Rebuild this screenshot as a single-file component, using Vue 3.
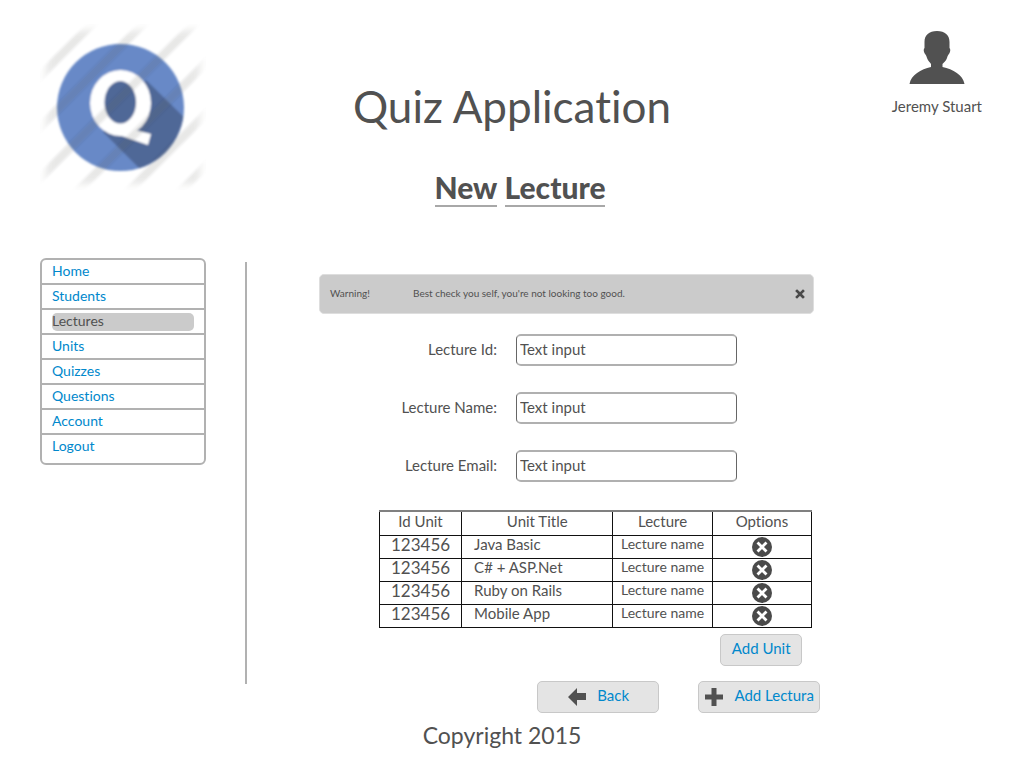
<script setup>
const links = ['Home', 'Students', 'Lectures', 'Units', 'Quizzes', 'Questions', 'Account', 'Logout']
const fields = [
  { id: 'lecture-id', label: 'Lecture Id:' },
  { id: 'lecture-name', label: 'Lecture Name:' },
  { id: 'lecture-email', label: 'Lecture Email:' }
]
const units = ['Java Basic', 'C# + ASP.Net', 'Ruby on Rails', 'Mobile App']
const stripes = [52, 103, 154, 205, 256, 308]
</script>

<template>
  <div class="page">
    <header class="header">
      <svg class="logo" viewBox="0 0 166 166" role="img" aria-label="Quiz logo">
        <defs>
          <clipPath id="disc"><circle cx="80.5" cy="83.5" r="63.5" /></clipPath>
          <filter id="soft"><feGaussianBlur stdDeviation="0.8" /></filter>
          <filter id="edge"><feGaussianBlur stdDeviation="4" /></filter>
          <filter id="feather"><feGaussianBlur stdDeviation="1.3" /></filter>
          <mask id="fade"><rect x="6" y="6" width="154" height="154" fill="#fff" filter="url(#edge)" /></mask>
        </defs>
        <g filter="url(#soft)">
          <circle cx="80.5" cy="83.5" r="63.5" fill="#6889c7" />
          <path d="M106 56L160 109V160H115L63 108Z" fill="#4f6797" clip-path="url(#disc)" />
          <ellipse cx="80.5" cy="79" rx="30.5" ry="33" fill="#fff" />
          <path d="M70 108L108 121L111 110L95 106Z" fill="#fff" />
          <ellipse cx="80.3" cy="78.3" rx="15.8" ry="21.2" fill="#4f6797" />
        </g>
        <g mask="url(#fade)">
          <g filter="url(#feather)" stroke="rgb(95,95,80)" stroke-opacity="0.14" stroke-width="8">
            <path v-for="s in stripes" :key="s" :d="`M${s + 20} -20L-20 ${s + 20}`" />
          </g>
        </g>
      </svg>
      <div class="titles">
        <h1>Quiz Application</h1>
        <h2><span>New</span> <span>Lecture</span></h2>
      </div>
      <div class="user">
        <svg class="avatar" viewBox="0 0 56 53" aria-hidden="true">
          <path d="M28 0C20 0 15.500 4 15.500 11V17C14.300 18 14.500 21 16 23C17 24 17.500 25 18 27C19 30 21 31 22 33V36C12 38 2 44 0.500 53H55.500C54 44 44 38 33.500 36V33C35 31 37 30 38 27C38.500 25 39 24 40 23C41.500 21 41.700 18 40.500 17V11C40.500 4 36 0 28 0Z" fill="#515151" />
        </svg>
        <span>Jeremy Stuart</span>
      </div>
    </header>

    <div class="body">
      <nav class="menu">
        <a v-for="link in links" :key="link" href="#"><span :class="{ current: link === 'Lectures' }">{{ link }}</span></a>
      </nav>
      <div class="divider"></div>
      <main>
        <div class="alert" role="alert">
          <span class="kind">Warning!</span>
          <span class="message">Best check you self, you're not looking too good.</span>
          <button type="button" class="close" aria-label="Close">
            <svg viewBox="0 0 10 10"><path d="M2 2L8 8M8 2L2 8" stroke="#4a4a4a" stroke-width="2.6" stroke-linecap="square" /></svg>
          </button>
        </div>
        <form class="form">
          <div v-for="field in fields" :key="field.id" class="field">
            <label :for="field.id">{{ field.label }}</label>
            <input :id="field.id" type="text" value="Text input">
          </div>
        </form>
        <table class="units">
          <colgroup><col class="c-id"><col class="c-title"><col class="c-lecture"><col class="c-options"></colgroup>
          <thead>
            <tr><th>Id Unit</th><th>Unit Title</th><th>Lecture</th><th>Options</th></tr>
          </thead>
          <tbody>
            <tr v-for="unit in units" :key="unit">
              <td class="number">123456</td>
              <td class="title">{{ unit }}</td>
              <td class="lecture">Lecture name</td>
              <td class="option">
                <button type="button" class="remove" aria-label="Remove unit">
                  <svg viewBox="0 0 20 20"><circle cx="10" cy="10" r="10" fill="#4a4a4a" /><path d="M6.500 6.500L13.500 13.500M13.500 6.500L6.500 13.500" stroke="#fff" stroke-width="2.8" stroke-linecap="square" /></svg>
                </button>
              </td>
            </tr>
          </tbody>
        </table>
        <div class="add-row"><button type="button" class="btn small">Add Unit</button></div>
        <div class="actions">
          <button type="button" class="btn">
            <svg viewBox="0 0 20 20"><path d="M1 10L10 1V6H19V13H10V19Z" fill="#515151" /></svg>
            Back
          </button>
          <button type="button" class="btn">
            <svg viewBox="0 0 20 20"><path d="M7.500 1H12.500V7.500H19V12.500H12.500V19H7.500V12.500H1V7.500H7.500Z" fill="#515151" /></svg>
            Add Lectura
          </button>
        </div>
      </main>
    </div>
    <footer>Copyright 2015</footer>
  </div>
</template>

<style>
body { background: #fff; }
</style>

<style scoped>
* { box-sizing: border-box; }
.page { padding: 24px 40px 0; font-family: Lato, "Noto Sans", sans-serif; font-size: 15px; line-height: 20px; color: #515151; font-variant-ligatures: none; }
button, input { font: inherit; color: inherit; }
svg { display: block; }

.header { display: grid; grid-template-columns: 1fr auto 1fr; height: 234px; }
.logo { width: 166px; height: 166px; }
.titles { padding-top: 56px; text-align: center; }
h1 { margin: 0; font-size: 44px; line-height: 52px; font-weight: 400; }
h2 { margin: 0; padding: 38px 0 0 16px; font-size: 30px; line-height: 35px; font-weight: 900; }
h2 span { display: inline-block; border-bottom: 2px solid #a8a8a8; }
.user { justify-self: end; display: flex; flex-direction: column; align-items: center; gap: 12px; padding: 7px 2px 0 0; }
.avatar { width: 56px; height: 53px; }

.body { display: grid; grid-template-columns: 166px 2px minmax(0, 1fr); }
.menu { align-self: start; border: 2px solid #b1b1b1; border-radius: 6px; padding-bottom: 3px; font-size: 14px; }
.menu a { display: block; height: 25px; padding: 0 10px; color: #0088cc; text-decoration: none; border-bottom: 2px solid #b1b1b1; }
.menu a:last-child { border-bottom: 0; }
.menu span { display: block; padding-bottom: 2px; line-height: 16px; margin-top: 2px; }
.menu a { padding-top: 1px; }
.menu .current { background: #cbcbcb; color: #515151; border-radius: 5px; }
.divider { margin: 4px -39px 29px 39px; background: #b1b1b1; }
main { padding: 16px 16vw 0 111px; }

.alert { display: flex; align-items: center; height: 40px; margin-right: 6px; padding: 0 8px 3px 10px; border: 1px solid #dedede; border-radius: 5px; background: #cbcbcb; font-size: 10px; }
.kind { width: 83px; }
.message { flex: 1; }
.close { padding: 2px 0 0; border: 0; background: none; }
.close svg { width: 10px; height: 10px; }

.form { display: grid; gap: 26px; margin-top: 20px; padding-right: 83px; }
.field { display: grid; grid-template-columns: 178px minmax(0, 1fr); gap: 19px; }
.field label { text-align: right; line-height: 30px; }
.field input { width: 100%; height: 32px; padding: 0 3px 2px; border: solid; border-width: 2px 1px; border-color: #b0b0b0 #666; border-radius: 5px; background: #fff; outline: 0; }

.units { width: calc(100% - 68px); margin: 28px 0 0 60px; border-collapse: collapse; table-layout: fixed; border: 1px solid #111; border-top: 2px solid #808080; }
.c-id { width: 19%; }
.c-title { width: 35%; }
.c-lecture, .c-options { width: 23%; }
.units th, .units td { height: 23px; padding: 0; border: 1px solid #111; font-weight: 400; line-height: 16px; text-align: center; vertical-align: top; }
.units th { height: 24px; padding-top: 1px; }
.units .number { font-size: 17px; line-height: 18px; }
.units .title { padding-left: 12px; text-align: left; }
.units .lecture { font-size: 14px; }
.units .option { vertical-align: middle; }
.remove { display: block; margin: 0 auto; padding: 0; border: 0; background: none; }
.remove svg { width: 20px; height: 20px; }

.add-row { display: flex; justify-content: flex-end; margin: 6px 18px 0 0; }
.btn { display: flex; align-items: center; justify-content: center; gap: 10px; width: 122px; height: 32px; padding: 0 0 3px; border: 1px solid #c8c8c8; border-radius: 5px; background: #e4e4e4; color: #0088cc; }
.btn.small { width: 82px; }
.btn svg { width: 20px; height: 20px; margin-top: 3px; }
.actions { display: flex; justify-content: flex-end; gap: 39px; margin-top: 15px; }
footer { padding: 7px 20px 0 0; font-size: 23px; line-height: 30px; text-align: center; }
</style>
